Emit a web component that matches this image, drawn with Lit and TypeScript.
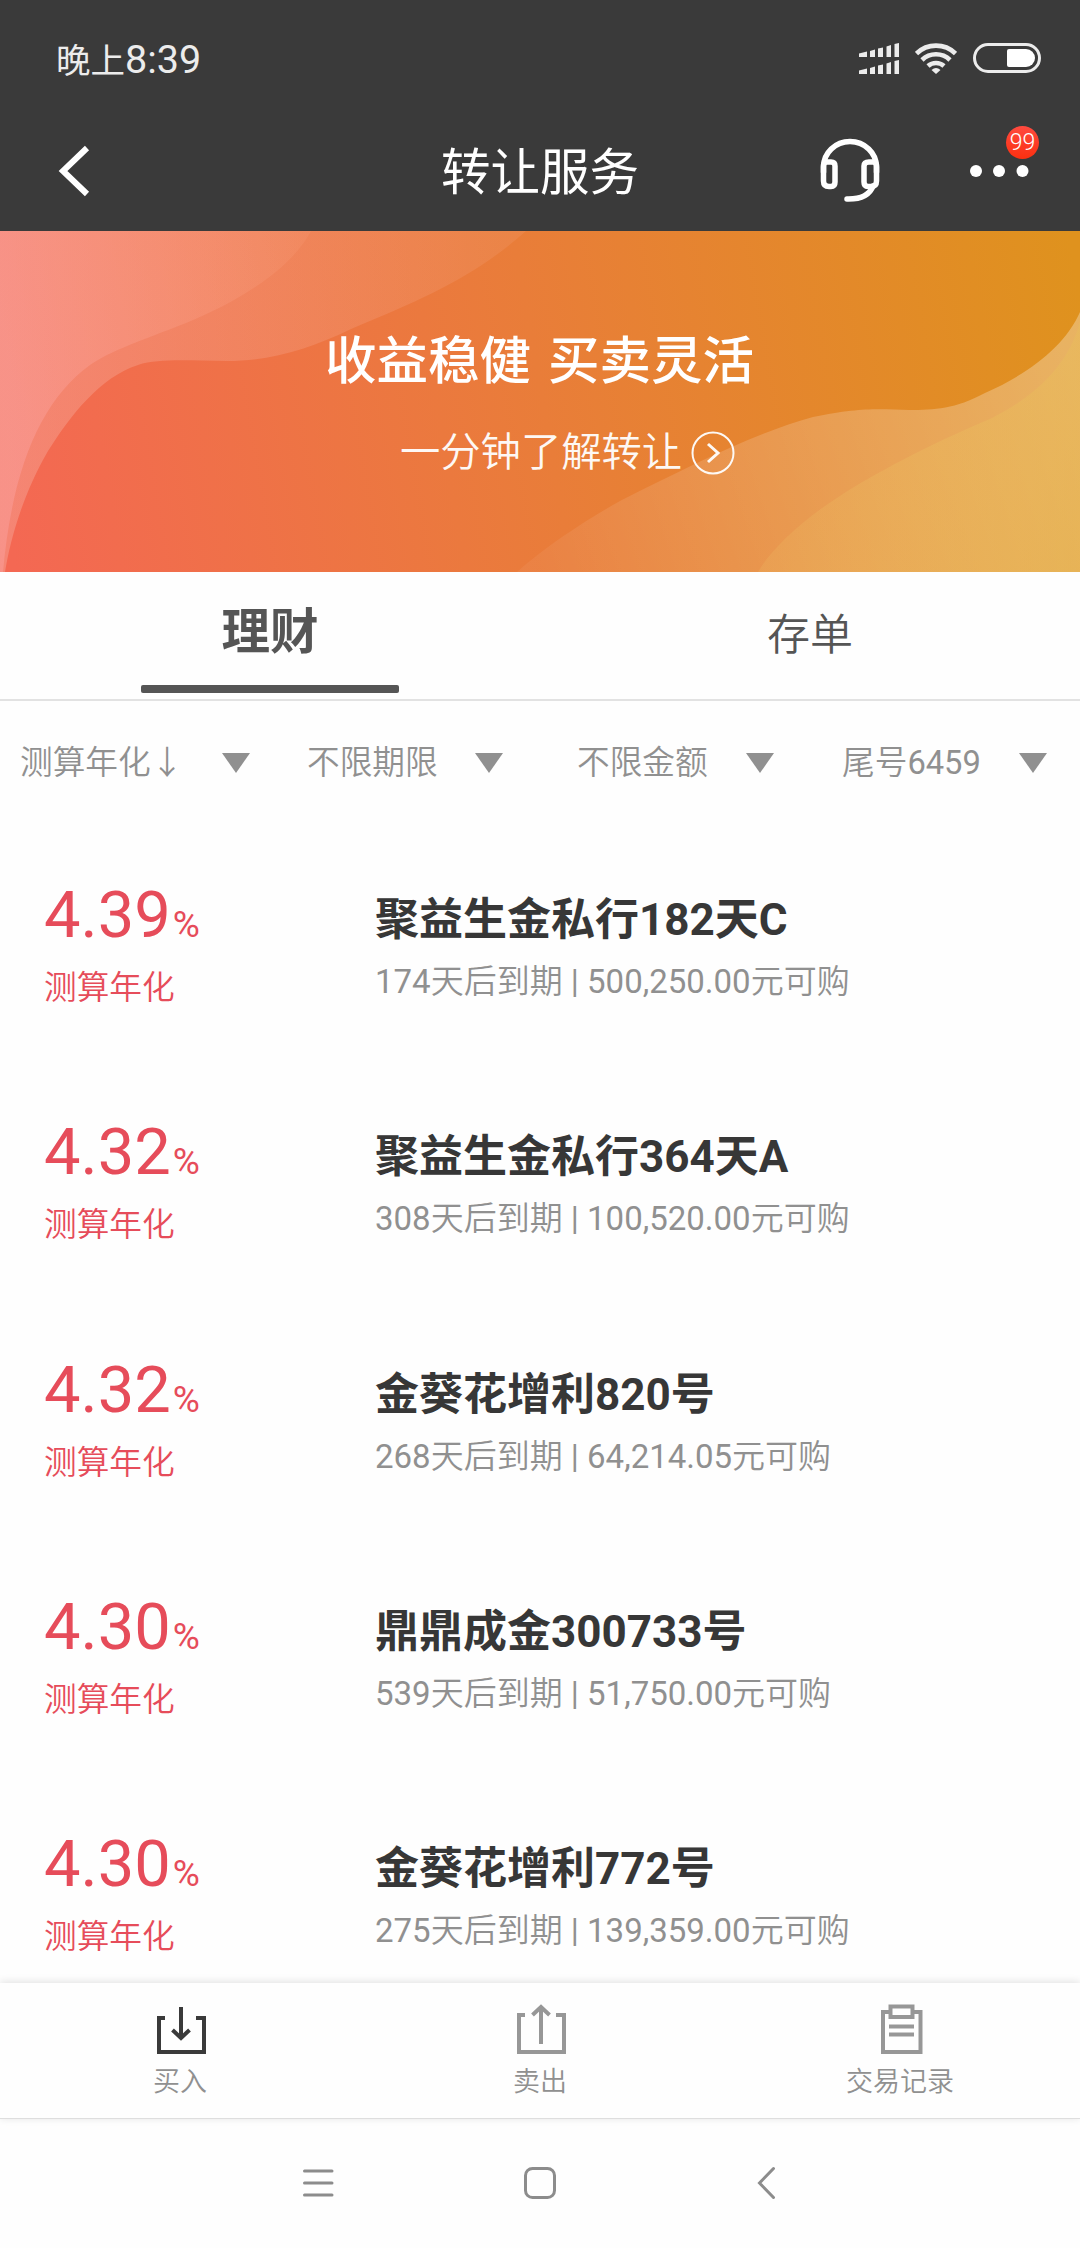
import { LitElement, html, css, svg } from "lit";
import { customElement } from "lit/decorators.js";

const rows = [
  { rate: "4.39", name: "聚益生金私行182天C", info: "174天后到期 | 500,250.00元可购" },
  { rate: "4.32", name: "聚益生金私行364天A", info: "308天后到期 | 100,520.00元可购" },
  { rate: "4.32", name: "金葵花增利820号", info: "268天后到期 | 64,214.05元可购" },
  { rate: "4.30", name: "鼎鼎成金300733号", info: "539天后到期 | 51,750.00元可购" },
  { rate: "4.30", name: "金葵花增利772号", info: "275天后到期 | 139,359.00元可购" },
];

// Latin runs are set in regular weight beside the lighter Chinese text.
const mixed = (text: string) =>
  text.split(/([\x20-\x7e]+)/).filter(Boolean).map((part) => (/^[\x20-\x7e]/.test(part) ? html`<span class="latin">${part}</span>` : part));

const signalRow = (y: number) => svg`
  <path d="M0 ${y + 10.5}L8 ${y + 8.5}V${y + 14}H0Z"/>
  <path d="M11 ${y + 8}L16 ${y + 6.5}V${y + 14}H11Z"/>
  <path d="M19 ${y + 5.5}L24 ${y + 4.5}V${y + 14}H19Z"/>
  <path d="M27.500 ${y + 3.5}L32 ${y + 2}V${y + 14}H27.500Z"/>
  <path d="M35.500 ${y + 1}L40 ${y}V${y + 14}H35.500Z"/>`;

@customElement("app-root")
export class AppRoot extends LitElement {
  static styles = css`
    :host {
      display: flex;
      flex-direction: column;
      width: 1080px;
      height: 2248px;
      overflow: hidden;
      background: #fefefe;
      font-family: Roboto, "Noto Sans CJK SC", sans-serif;
      font-weight: 350;
      color: #909090;
    }
    * { box-sizing: border-box; }
    svg { display: block; flex: none; }
    .latin { font-weight: 400; }
    .status {
      height: 112px;
      background: #3a3a3a;
      color: #ececec;
      display: flex;
      align-items: flex-start;
      padding: 43px 39px 0 56px;
    }
    .time { flex: 1; font-size: 34.500px; line-height: 34px; font-weight: 400; display: flex; align-items: baseline; }
    .clock { font-size: 39.500px; font-weight: 400; }
    .sig { margin-right: 16px; }
    .wifi { margin-right: 16px; }
    .header {
      height: 119px;
      background: #3a3a3a;
      color: #fff;
      display: grid;
      grid-template-columns: 420px 240px 420px;
      align-items: center;
      padding-bottom: 2px;
    }
    .back { padding-left: 57px; }
    .title { font-size: 49.500px; line-height: 60px; text-align: center; white-space: nowrap; padding-top: 5px; font-weight: 400; }
    .actions { display: flex; align-items: center; padding-left: 159px; }
    .more { position: relative; margin-left: 89px; }
    .badge {
      position: absolute;
      left: 36px;
      top: -39px;
      width: 33px;
      height: 33px;
      border-radius: 50%;
      background: linear-gradient(#ff4a3f, #fb3010);
      color: #fff;
      font-size: 23px;
      line-height: 34px;
      text-align: center;
    }
    .banner { position: relative; height: 341px; flex: none; }
    .art { position: absolute; inset: 0; }
    .copy { position: relative; color: #fff; padding-top: 96px; }
    .slogan { font-size: 51.500px; line-height: 70px; font-weight: 500; text-align: center; white-space: pre; word-spacing: 4px; padding-right: 1px; }
    .learn { display: flex; align-items: center; font-size: 40.300px; line-height: 56px; padding: 28px 0 0 400px; opacity: .95; }
    .go { margin-left: 9px; }
    .tabs { height: 129px; flex: none; display: grid; grid-template-columns: 1fr 1fr; border-bottom: 2px solid #e2e2e2; color: #555; }
    .tab { display: flex; flex-direction: column; align-items: center; justify-content: space-between; padding: 30px 0 6px; font-size: 43px; line-height: 66px; }
    .active { font-size: 48.500px; font-weight: 700; padding-top: 28px; }
    .bar { width: 258px; height: 8px; border-radius: 2px; background: #555; }
    .blank { visibility: hidden; }
    .filters { height: 123px; margin-bottom: 2px; flex: none; display: flex; align-items: center; font-size: 32.700px; line-height: 40px; }
    .filter { display: flex; align-items: center; justify-content: space-between; }
    .f1 { margin-left: 20px; width: 230px; }
    .f2 { margin-left: 57px; width: 196px; }
    .f3 { margin-left: 74px; width: 197px; }
    .f4 { margin-left: 68px; width: 205px; }
    .list { flex: 1; min-height: 0; overflow: hidden; }
    .row { height: 237.300px; display: grid; grid-template-columns: 375px 1fr; padding-top: 55px; }
    .left { padding-left: 44px; color: #e64c5a; }
    .rate { font-size: 65px; line-height: 68px; font-weight: 400; display: flex; align-items: baseline; }
    .pct { font-size: 37px; margin-left: 2px; }
    .label { font-size: 32.700px; line-height: 40px; margin-top: 9px; }
    .name { font-size: 44px; line-height: 60px; font-weight: 700; color: #373737; margin-top: 9px; }
    .info { font-size: 33px; line-height: 40px; margin-top: 12px; white-space: pre; }
    .toolbar { height: 136px; flex: none; display: grid; grid-template-columns: repeat(3, 1fr); box-shadow: 0 -1px 8px rgba(0,0,0,.12); border-bottom: 1px solid #dedede; background: #fefefe; }
    .tool { display: flex; flex-direction: column; align-items: center; padding-top: 19px; font-size: 27px; line-height: 34px; }
    .tool svg { margin-bottom: 9px; }
    .nav { height: 129px; flex: none; display: flex; align-items: center; padding: 0 0 2px 302px; }
    .home { margin-left: 189px; }
    .return { margin-left: 199px; }
  `;

  private caret() {
    return html`<svg width="28" height="20" viewBox="0 0 28 20"><path d="M0 0H28L14 20Z" fill="#909090"/></svg>`;
  }

  render() {
    return html`
      <div class="status">
        <div class="time">晚上<span class="clock">8:39</span></div>
        <svg class="sig" width="40" height="32" viewBox="0 0 40 32" fill="#ececec">${signalRow(0)}${signalRow(17)}</svg>
        <svg class="wifi" width="42" height="31" viewBox="0 0 42 31" fill="none" stroke="#ececec" stroke-width="4.600">
          <path d="M1.500 10.500A28 28 0 0 1 40.500 10.500M7 17A20 20 0 0 1 35 17M13 23A12 12 0 0 1 29 23"/>
          <path d="M16.500 27Q21 23 25.500 27L21 31Z" fill="#ececec" stroke="none"/>
        </svg>
        <svg width="68" height="30" viewBox="0 0 68 30">
          <rect x="1.500" y="1.500" width="65" height="27" rx="13.500" fill="none" stroke="#ececec" stroke-width="3"/>
          <path d="M36 6H53A9 9 0 0 1 53 24H36Q34 24 34 22V8Q34 6 36 6Z" fill="#fff"/>
        </svg>
      </div>
      <div class="header">
        <svg class="back" width="92" height="52" viewBox="-57 0 35 52" fill="none" stroke="#fff" stroke-width="6"><path d="M-27 3L-51 26L-27 49"/></svg>
        <div class="title">转让服务</div>
        <div class="actions">
          <svg width="62" height="66" viewBox="0 0 62 66" fill="none" stroke="#fff" stroke-width="5.500" stroke-linecap="round" stroke-linejoin="round">
            <path d="M4.500 34V29A26.500 25.500 0 0 1 57.500 29V34"/>
            <path d="M4.500 27Q5 24 8 24H12Q16 24 16 28V44Q16 48.500 12 48.500H10Q4.500 48.500 4.500 43Z"/>
            <path d="M57.500 27Q57 24 54 24H50Q45 24 45 28V44Q45 48.500 49 48.500H52Q57.500 48.500 57.500 43Z"/>
            <path d="M54 48Q49 61.500 28 61"/>
          </svg>
          <div class="more">
            <svg width="60" height="12" viewBox="0 0 60 12" fill="#fff"><circle cx="6" cy="6" r="6"/><circle cx="29" cy="6" r="6"/><circle cx="52.500" cy="6" r="6"/></svg>
            <div class="badge">99</div>
          </div>
        </div>
      </div>
      <div class="banner">
        <svg class="art" width="1080" height="341" viewBox="0 0 1080 341">
          <defs>
            <linearGradient id="base" gradientUnits="userSpaceOnUse" x1="0" y1="250" x2="1080" y2="60">
              <stop offset="0" stop-color="#f46853"/><stop offset=".5" stop-color="#e97d39"/><stop offset="1" stop-color="#df921e"/>
            </linearGradient>
            <linearGradient id="pink" gradientUnits="userSpaceOnUse" x1="0" y1="60" x2="520" y2="40">
              <stop offset="0" stop-color="#f8d0c8" stop-opacity=".28"/><stop offset="1" stop-color="#ffc8c0" stop-opacity=".1"/>
            </linearGradient>
            <linearGradient id="deep" gradientUnits="userSpaceOnUse" x1="0" y1="80" x2="310" y2="20">
              <stop offset="0" stop-color="#fca4a4" stop-opacity=".42"/><stop offset="1" stop-color="#ffb090" stop-opacity=".12"/>
            </linearGradient>
            <linearGradient id="gold" gradientUnits="userSpaceOnUse" x1="540" y1="341" x2="1080" y2="160">
              <stop offset="0" stop-color="#fff" stop-opacity=".05"/><stop offset="1" stop-color="#fff" stop-opacity=".3"/>
            </linearGradient>
            <linearGradient id="sand" gradientUnits="userSpaceOnUse" x1="760" y1="200" x2="1080" y2="340">
              <stop offset="0" stop-color="#f0d070" stop-opacity=".1"/><stop offset="1" stop-color="#e6b850" stop-opacity=".5"/>
            </linearGradient>
          </defs>
          <rect width="1080" height="341" fill="url(#base)"/>
          <path d="M0 0H526C475 45 430 65 351 98C310 118 270 130 227 130C190 130 160 127 138 134C100 146 70 185 48 220C22 265 10 310 5 341H0Z" fill="url(#pink)"/>
          <path d="M0 0H311C290 40 235 72 186 92C140 110 110 120 90 134C40 170 12 240 3 341H0Z" fill="url(#deep)"/>
          <path d="M1080 81C1065 115 1030 142 985 162C955 178 935 179 909 179C880 178 860 176 813 186C760 200 690 235 620 270C570 298 535 325 517 341H1080Z" fill="url(#gold)"/>
          <path d="M1080 91C1068 135 1035 165 992 187C930 213 870 245 840 265C800 290 770 320 758 341H1080Z" fill="url(#sand)"/>
        </svg>
        <div class="copy">
          <div class="slogan">收益稳健 买卖灵活</div>
          <div class="learn">一分钟了解转让
            <svg class="go" width="44" height="44" viewBox="0 0 44 44" fill="none" stroke="#fff"><circle cx="22" cy="22" r="20.500" stroke-width="2"/><path d="M17 13L27 22L17 31" stroke-width="3"/></svg>
          </div>
        </div>
      </div>
      <div class="tabs">
        <div class="tab active">理财<div class="bar"></div></div>
        <div class="tab">存单<div class="bar blank"></div></div>
      </div>
      <div class="filters">
        <div class="filter f1">测算年化↓${this.caret()}</div>
        <div class="filter f2">不限期限${this.caret()}</div>
        <div class="filter f3">不限金额${this.caret()}</div>
        <div class="filter f4"><span>${mixed("尾号6459")}</span>${this.caret()}</div>
      </div>
      <div class="list">
        ${rows.map((r) => html`
          <div class="row">
            <div class="left">
              <div class="rate">${r.rate}<span class="pct">%</span></div>
              <div class="label">测算年化</div>
            </div>
            <div>
              <div class="name">${r.name}</div>
              <div class="info">${mixed(r.info)}</div>
            </div>
          </div>`)}
      </div>
      <div class="toolbar">
        <div class="tool">
          <svg width="54" height="54" viewBox="0 0 54 54" fill="none" stroke="#3a3a3a" stroke-width="4"><path d="M12 16H6V50H51V16H43M28 5V36M19.500 28L28 36L36.500 28"/></svg>
          买入
        </div>
        <div class="tool">
          <svg width="54" height="54" viewBox="0 0 54 54" fill="none" stroke="#979797" stroke-width="4"><path d="M12 13H6V50H51V13H43M28 42V5M19.500 13L28 5L36.500 13"/></svg>
          卖出
        </div>
        <div class="tool">
          <svg width="54" height="54" viewBox="0 0 54 54" fill="none" stroke="#979797" stroke-width="4"><path d="M18 10H10V50H47.500V10H39.500M17.500 4.500H39.500V15H17.500ZM16 24.500H41M16 32.500H41"/></svg>
          交易记录
        </div>
      </div>
      <div class="nav">
        <svg width="32" height="32" viewBox="0 0 32 32" stroke="#8c8c8c" stroke-width="3" stroke-linecap="round"><path d="M2.500 4H30M2.500 16H30M2.500 28H30"/></svg>
        <svg class="home" width="34" height="34" viewBox="0 0 34 34" fill="none" stroke="#8c8c8c" stroke-width="3"><rect x="2.500" y="2.500" width="29" height="29" rx="7"/></svg>
        <svg class="return" width="20" height="34" viewBox="0 0 20 34" fill="none" stroke="#8c8c8c" stroke-width="3" stroke-linecap="round"><path d="M17.500 2.500L3.500 17L17.500 31.500"/></svg>
      </div>
    `;
  }
}
